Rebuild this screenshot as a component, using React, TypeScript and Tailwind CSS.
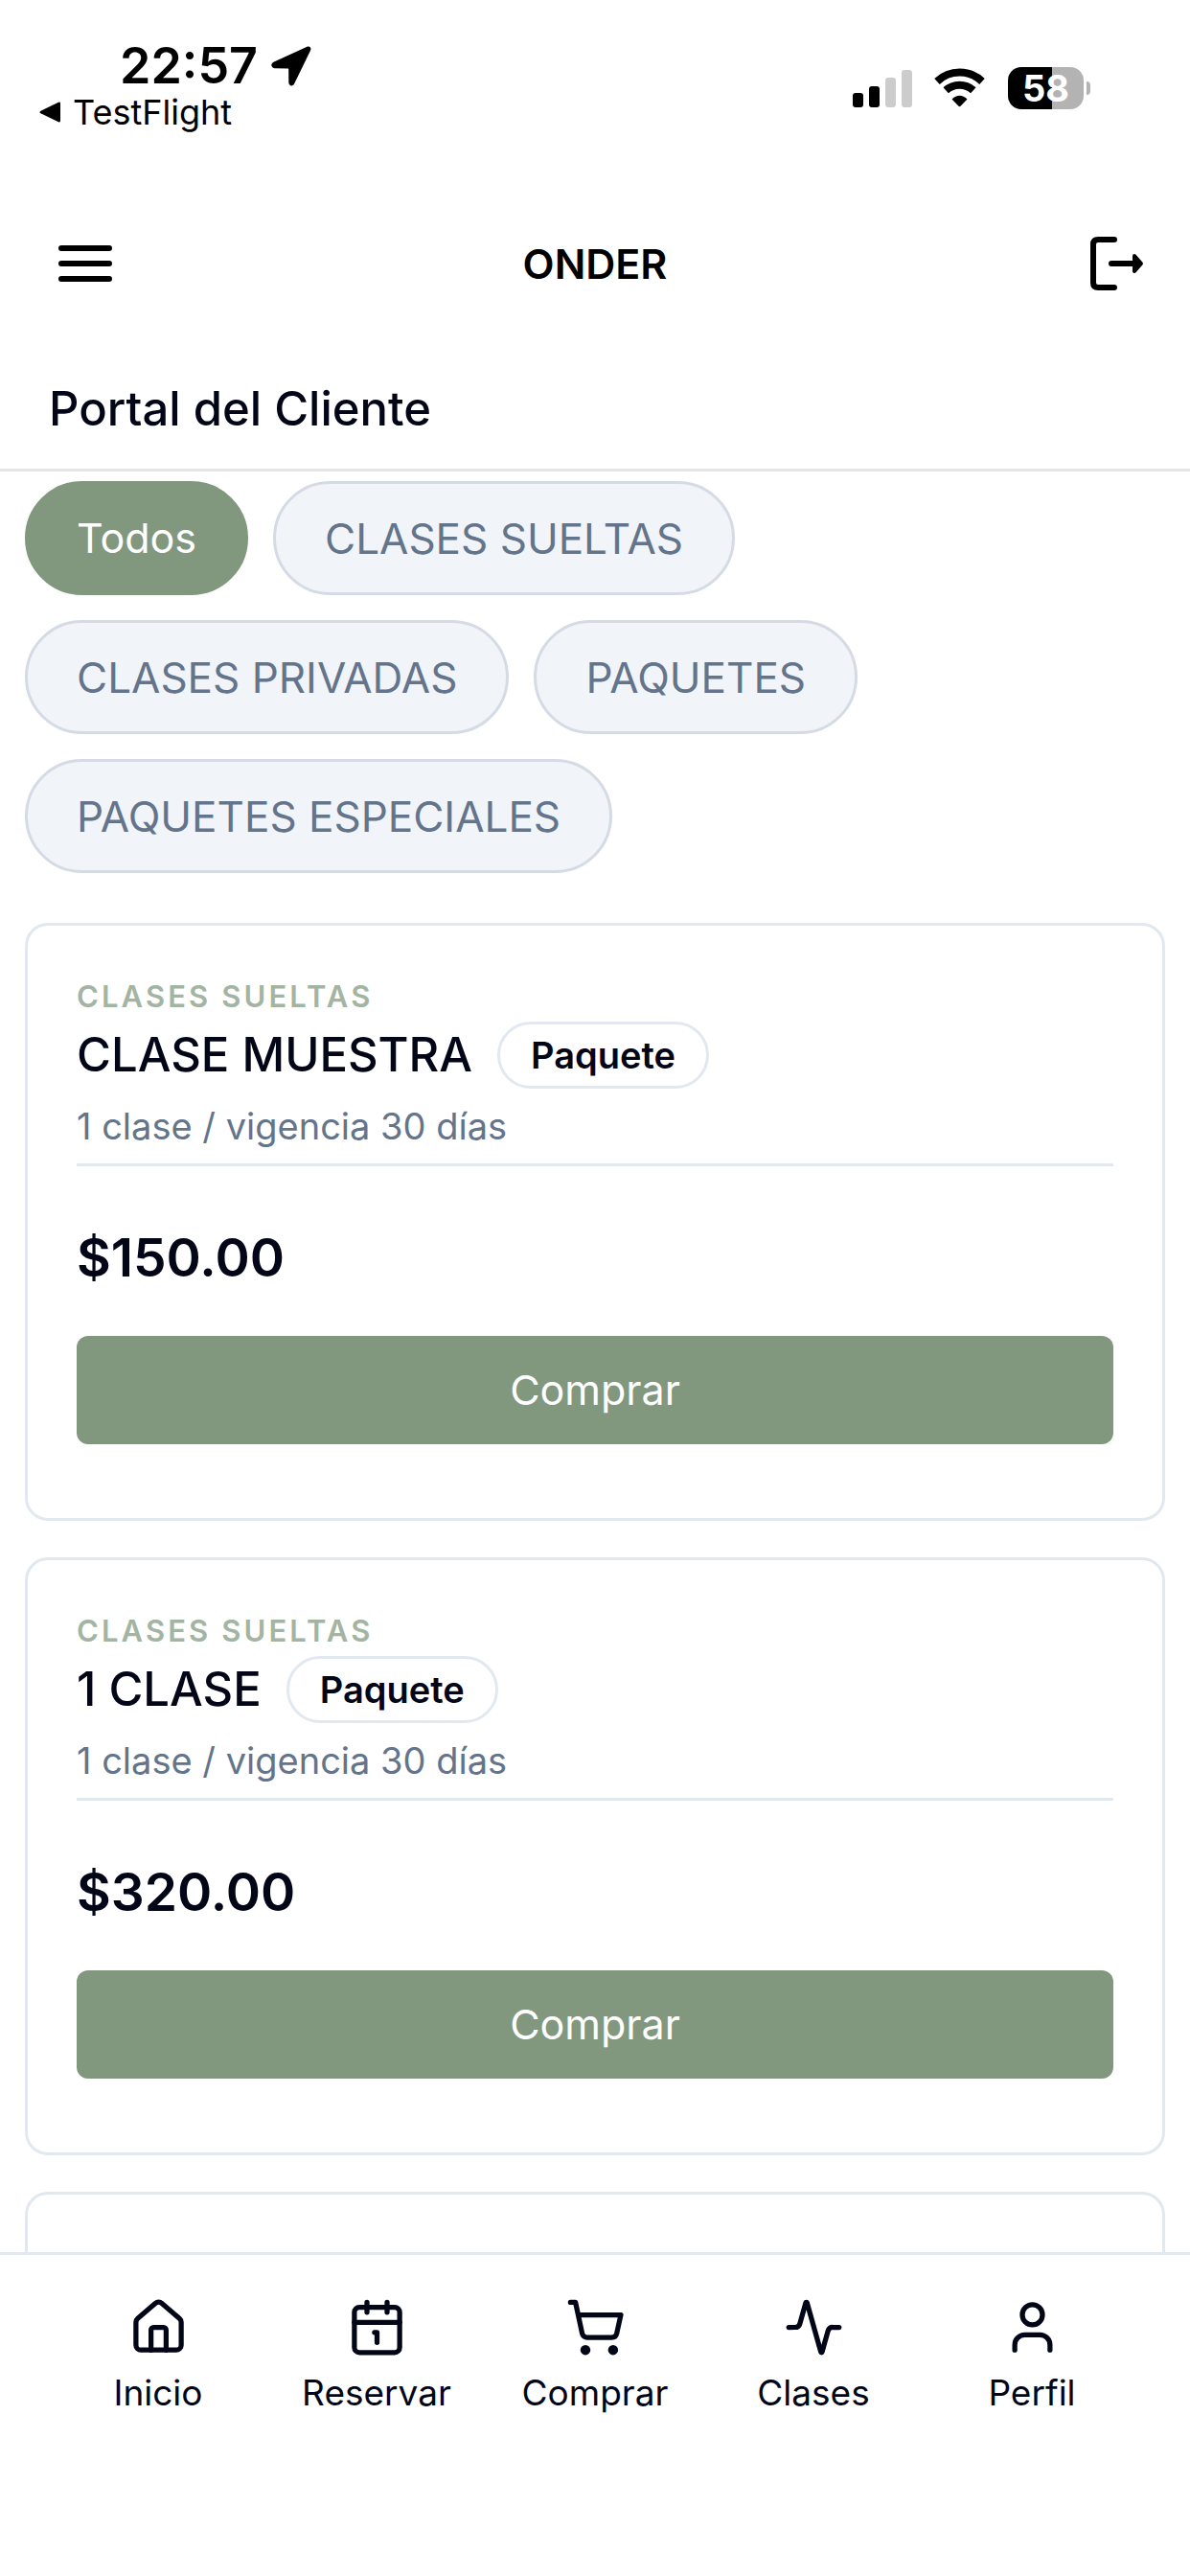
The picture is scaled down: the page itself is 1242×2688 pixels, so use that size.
import { Activity, Calendar1, House, ShoppingCart, User } from "lucide-react";
import type { LucideIcon } from "lucide-react";

type Product = { category: string; name: string; detail: string; price: string };

const filters = ["Todos", "CLASES SUELTAS", "CLASES PRIVADAS", "PAQUETES", "PAQUETES ESPECIALES"];

const products: Product[] = [
  { category: "CLASES SUELTAS", name: "CLASE MUESTRA", detail: "1 clase / vigencia 30 días", price: "$150.00" },
  { category: "CLASES SUELTAS", name: "1 CLASE", detail: "1 clase / vigencia 30 días", price: "$320.00" },
];

const tabs: { label: string; Icon: LucideIcon }[] = [
  { label: "Inicio", Icon: House },
  { label: "Reservar", Icon: Calendar1 },
  { label: "Comprar", Icon: ShoppingCart },
  { label: "Clases", Icon: Activity },
  { label: "Perfil", Icon: User },
];

function StatusBar() {
  return (
    <div className="flex h-[186px] shrink-0 items-start justify-between pr-[104px] pl-[41px] text-black">
      <div className="pt-[40px]">
        <div className="flex items-center gap-[14px] pl-[84px]">
          <span className="text-[52px] leading-[58px] font-semibold">22:57</span>
          <svg className="size-[42px]" viewBox="0 0 42 42" aria-hidden="true">
            <path
              d="M37.5 .8 L2.5 16.8 C-.8 18.5 -.2 23 3.5 23.2 L17.3 23.4 C18 23.4 18.2 23.7 18.2 24.3 L18.3 38 C18.5 42 22.8 42.6 24.2 39.3 L41 4.8 C42.3 1.8 40.3 -.4 37.5 .8 Z"
              fill="currentColor"
            />
          </svg>
        </div>
        <button type="button" className="flex items-center gap-[13px] text-[36px] leading-[38px]">
          <svg className="h-[22px] w-[22px]" viewBox="0 0 22 22" aria-hidden="true">
            <path d="M20 .8 L1.5 9.7 Q-.6 11 1.5 12.3 L20 21.2 Q22 22 22 20 V2 Q22 0 20 .8 Z" fill="currentColor" />
          </svg>
          TestFlight
        </button>
      </div>
      <div className="flex items-center pt-[70px]">
        <svg className="h-[44px] w-[62px]" viewBox="0 0 62 44" role="img" aria-label="Señal">
          <rect x="0" y="27" width="11" height="15" rx="3" fill="#000" />
          <rect x="17" y="20" width="11" height="22" rx="3" fill="#000" />
          <rect x="34" y="11" width="11" height="31" rx="3" fill="#ccc" />
          <rect x="51" y="3" width="11" height="39" rx="3" fill="#ccc" />
        </svg>
        <svg className="ml-[23px] h-[44px] w-[53px]" viewBox="0 0 53 44" role="img" aria-label="Wi-Fi">
          <path d="M3 15 A34 34 0 0 1 50 15" fill="none" stroke="#000" strokeWidth="8" />
          <path d="M12.2 24.3 A21 21 0 0 1 40.8 24.3" fill="none" stroke="#000" strokeWidth="8" />
          <path d="M18.5 33.5 Q26.5 26 34.5 33.5 L27.5 40.8 Q26.5 41.6 25.5 40.8 Z" fill="#000" />
        </svg>
        <div className="ml-[24px] flex h-[44px] w-[79px] items-center justify-center rounded-[14px] bg-linear-to-r from-black from-58% to-[#b3b3b3] to-58% text-[38px] leading-[44px] font-bold text-white">
          58
        </div>
        <div className="ml-[3px] h-[14px] w-[4px] rounded-r-full bg-[#b3b3b3]" />
      </div>
    </div>
  );
}

function Header() {
  return (
    <header className="shrink-0 border-b-[3px] border-[#e5e5e5]">
      <div className="grid h-[178px] grid-cols-[1fr_auto_1fr] items-center text-black">
        <button type="button" aria-label="Menú" className="ml-[60px] justify-self-start">
          <svg className="h-[40px] w-[58px]" viewBox="0 0 58 40" fill="none" stroke="currentColor" strokeWidth="6" strokeLinecap="round">
            <path d="M4 4H54M4 20H54M4 36H54" />
          </svg>
        </button>
        <h1 className="text-[43px] leading-[50px] font-semibold">ONDER</h1>
        <button type="button" aria-label="Cerrar sesión" className="mr-[48px] justify-self-end">
          <svg className="h-[60px] w-[58px]" viewBox="0 0 58 60" fill="none" stroke="currentColor" strokeWidth="6" strokeLinecap="round">
            <path d="M27 5H10Q5 5 5 10V50Q5 55 10 55H27M24 30H48" />
            <path d="M48 22L55 30L48 38Z" fill="currentColor" strokeWidth="4" strokeLinejoin="round" />
          </svg>
        </button>
      </div>
      <h2 className="px-[51px] pt-[33px] pb-[32px] text-[49px] leading-[60px] font-medium">Portal del Cliente</h2>
    </header>
  );
}

function ProductCard({ category, name, detail, price }: Product) {
  return (
    <article className="rounded-[24px] border-[3px] border-[#e2e8f0] px-[51px] pt-[51px] pb-[77px]">
      <p className="text-[31px] leading-[46px] font-semibold tracking-widest text-[#a3b5a2]">{category}</p>
      <div className="flex items-center gap-[26px]">
        <h3 className="text-[49px] leading-[76px] font-medium">{name}</h3>
        <span className="rounded-full border-[3px] border-[#e2e8f0] px-[32px] py-[8px] text-[38px] leading-[48px] font-semibold">
          Paquete
        </span>
      </div>
      <p className="border-b-[3px] border-[#e2e8f0] pb-[3px] text-[38px] leading-[72px] text-[#64748b]">{detail}</p>
      <p className="pt-[63px] pb-[50px] text-[55px] leading-[64px] font-semibold">{price}</p>
      <button type="button" className="h-[113px] w-full rounded-[12px] bg-[#81987f] text-[43px] text-white">
        Comprar
      </button>
    </article>
  );
}

export default function App() {
  return (
    <div className="flex h-screen flex-col overflow-hidden bg-white font-['Inter',sans-serif] text-[#020617]">
      <StatusBar />
      <Header />
      <main className="min-h-0 flex-1 overflow-hidden px-[26px] pt-[10px]">
        <div className="flex flex-wrap gap-[26px]">
          {filters.map((filter, i) => (
            <button
              key={filter}
              type="button"
              aria-pressed={i === 0}
              className={
                i === 0
                  ? "h-[119px] rounded-full border-[3px] border-[#81987f] bg-[#81987f] px-[51px] text-[43px] text-white"
                  : "h-[119px] rounded-full border-[3px] border-[#d5dbe5] bg-[#f1f4f9] px-[51px] text-[44px] text-[#64748b]"
              }
            >
              {filter}
            </button>
          ))}
        </div>
        <div className="flex flex-col gap-[38px] pt-[52px]">
          {products.map((product) => (
            <ProductCard key={product.name} {...product} />
          ))}
          <article className="h-[200px] rounded-[24px] border-[3px] border-[#e2e8f0]" />
        </div>
      </main>
      <nav className="grid h-[338px] shrink-0 grid-cols-5 items-start border-t-[3px] border-[#e2e8f0] px-[51px] pt-[44px]">
        {tabs.map(({ label, Icon }) => (
          <a key={label} href={`#${label.toLowerCase()}`} className="flex flex-col items-center gap-[12px]">
            <Icon className="size-[63px]" strokeWidth={2} />
            <span className="text-[37px] leading-[50px]">{label}</span>
          </a>
        ))}
      </nav>
    </div>
  );
}
